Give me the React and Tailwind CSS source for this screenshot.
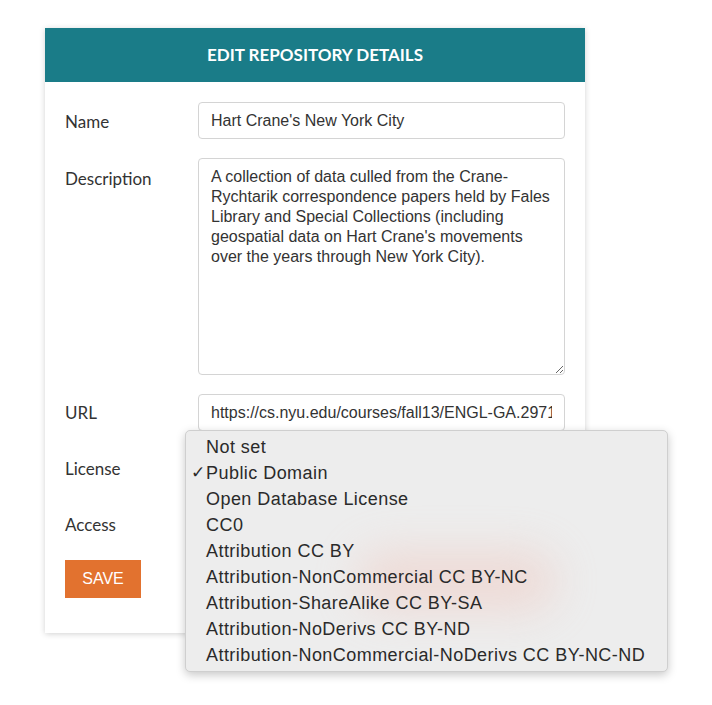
import React from 'react';

const licenses = [
  'Not set',
  'Public Domain',
  'Open Database License',
  'CC0',
  'Attribution CC BY',
  'Attribution-NonCommercial CC BY-NC',
  'Attribution-ShareAlike CC BY-SA',
  'Attribution-NoDerivs CC BY-ND',
  'Attribution-NonCommercial-NoDerivs CC BY-NC-ND',
];

const description =
  "A collection of data culled from the Crane-Rychtarik correspondence papers held by Fales Library and Special Collections (including geospatial data on Hart Crane's movements over the years through New York City).";

function Label({ children, className = '' }) {
  return (
    <div className={`w-[133px] shrink-0 text-[17px] text-[#333] font-['Lato',sans-serif] ${className}`}>
      {children}
    </div>
  );
}

export default function App() {
  return (
    <div className="min-h-[705px] w-[712px] bg-white pt-[28px] pl-[45px]">
      <div className="relative w-[540px] bg-white shadow-[0_1px_6px_rgba(0,0,0,0.18)] pb-[35px]">
        {/* Header */}
        <div className="h-[54px] bg-[#1a7c88] flex items-center justify-center">
          <h1 className="text-white text-[17px] font-bold font-['Lato',sans-serif]">
            EDIT REPOSITORY DETAILS
          </h1>
        </div>

        <div className="px-[20px] pt-[20px] flex flex-col gap-[19px]">
          <div className="flex items-center">
            <Label className="pt-[3px]">Name</Label>
            <input
              readOnly
              value="Hart Crane's New York City"
              className="w-[367px] h-[37px] rounded-[4px] border border-[#d4d4d4] px-[12px] text-[16px] text-[#333] font-['Liberation_Sans',Arial,sans-serif] outline-none"
            />
          </div>

          <div className="flex items-start">
            <Label className="pt-[8px]">Description</Label>
            <textarea
              readOnly
              value={description}
              className="w-[367px] h-[217px] rounded-[4px] border border-[#d4d4d4] px-[12px] py-[8px] text-[16px] leading-[20px] text-[#333] font-['Liberation_Sans',Arial,sans-serif] outline-none resize-y"
            />
          </div>

          <div className="flex items-center">
            <Label>URL</Label>
            <input
              readOnly
              value="https://cs.nyu.edu/courses/fall13/ENGL-GA.2971"
              className="w-[367px] h-[37px] rounded-[4px] border border-[#d4d4d4] px-[12px] text-[16px] text-[#333] font-['Liberation_Sans',Arial,sans-serif] outline-none"
            />
          </div>

          <div className="flex items-center">
            <Label>License</Label>
            <div className="w-[367px] h-[37px] rounded-[4px] border border-[#d4d4d4]" />
          </div>

          <div className="flex items-center">
            <Label>Access</Label>
            <div className="w-[367px] h-[37px] rounded-[4px] border border-[#d4d4d4]" />
          </div>

          <div className="-mt-[2px]">
            <button className="w-[76px] h-[38px] bg-[#e2722f] text-white text-[16px] font-['Liberation_Sans',Arial,sans-serif]">
              SAVE
            </button>
          </div>
        </div>

        {/* Open license dropdown */}
        <div className="absolute left-[140px] top-[402px] w-[483px] rounded-[5px] bg-[#ededed] border border-[#cfcfcf] shadow-[0_3px_10px_rgba(0,0,0,0.22)] py-[3px] overflow-hidden">
          <div className="absolute left-[170px] top-[120px] w-[200px] h-[60px] rounded-full bg-[#f0bfb4] opacity-40 blur-[22px]" />
          <ul className="relative font-['Liberation_Sans',Arial,sans-serif] text-[18px] tracking-[0.45px] text-[#2a2a2a]">
            {licenses.map((item, i) => (
              <li key={item} className="h-[26px] flex items-center">
                <span className="w-[20px] pl-[5px] text-[17px] tracking-normal">{i === 1 ? '✓' : ''}</span>
                <span>{item}</span>
              </li>
            ))}
          </ul>
        </div>
      </div>
    </div>
  );
}
